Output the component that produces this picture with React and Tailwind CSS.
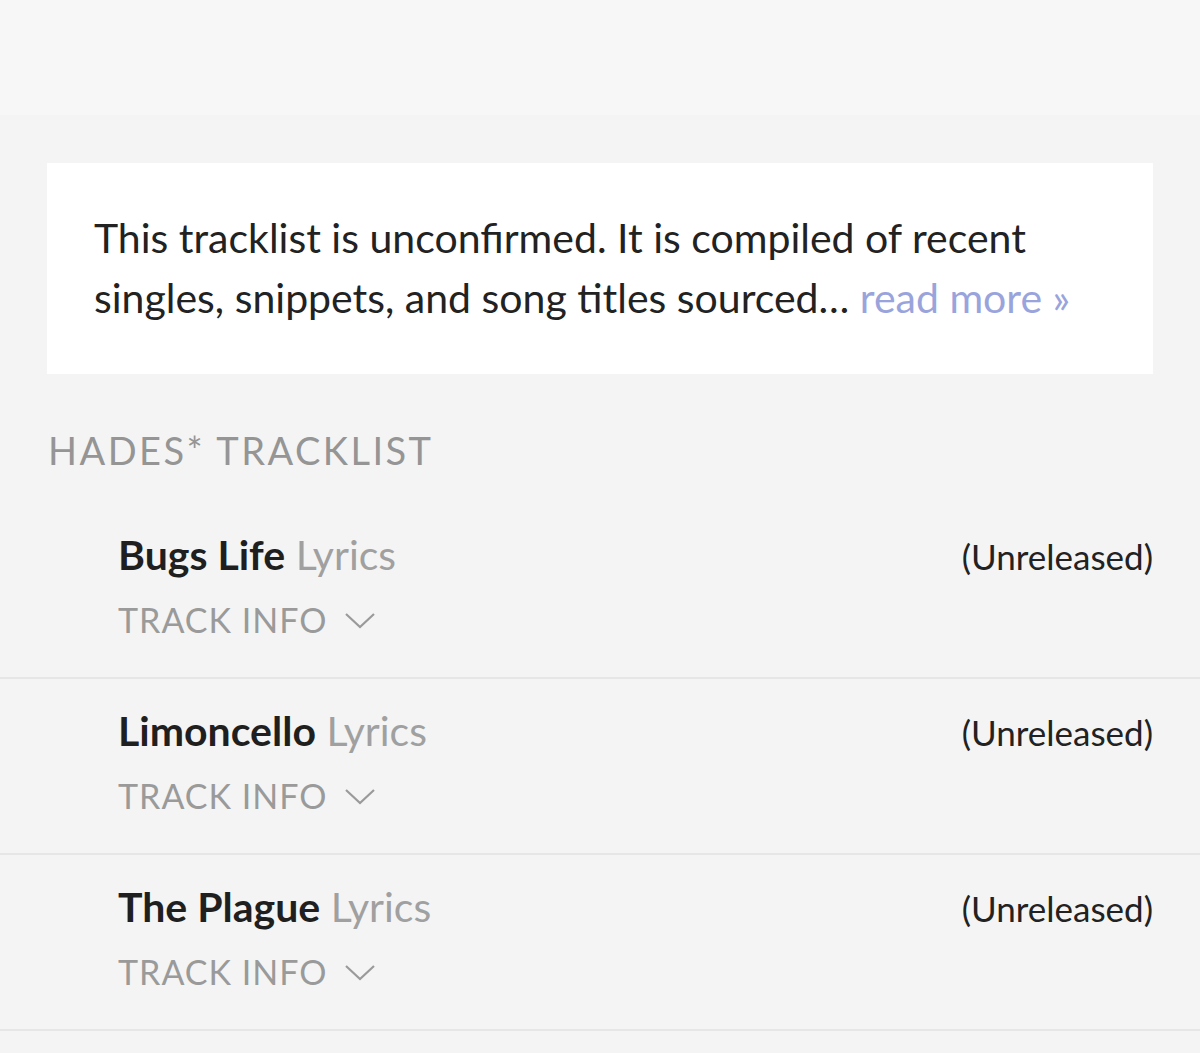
import React from "react";

const TRACKS = [
  { title: "Bugs Life" },
  { title: "Limoncello" },
  { title: "The Plague" },
];

function Chevron() {
  return (
    <svg width="32" height="20" viewBox="0 0 32 20" fill="none" className="ml-[16px]">
      <path d="M2 4 L16 17 L30 4" stroke="#9a9a9a" strokeWidth="2.2" />
    </svg>
  );
}

function TrackRow({ title }) {
  return (
    <div className="h-[176px] border-b-2 border-[#e6e6e6] pl-[118px] pr-[47px] pt-[27px]">
      <div className="flex items-baseline justify-between">
        <div className="text-[41px] leading-[48px]">
          <span className="font-bold text-[#1f1f1f]">{title}</span>{" "}
          <span className="text-[#a0a0a0]">Lyrics</span>
        </div>
        <div className="text-[35px] text-[#222]">(Unreleased)</div>
      </div>
      <div className="mt-[17px] flex items-center text-[34px] leading-[40px] tracking-[0.03em] text-[#9a9a9a]">
        TRACK INFO
        <Chevron />
      </div>
    </div>
  );
}

export default function App() {
  return (
    <div className="min-h-[1053px] w-full bg-[#f4f4f4] font-['Lato',sans-serif]">
      <div className="h-[115px] bg-[#f7f7f7]" />

      <div className="px-[47px] pt-[48px]">
        <div className="bg-white px-[47px] pt-[45px] pb-[46px]">
          <p className="text-[41px] leading-[60px] text-[#222]">
            This tracklist is unconfirmed. It is compiled of recent singles,
            snippets, and song titles sourced…{" "}
            <span className="text-[#9aa4dc]">read more »</span>
          </p>
        </div>
      </div>

      <div className="px-[48px] pt-[52px] pb-[29px]">
        <h2 className="text-[38px] leading-[48px] tracking-[0.065em] text-[#959595]">
          HADES* TRACKLIST
        </h2>
      </div>

      <div>
        {TRACKS.map((t) => (
          <TrackRow key={t.title} title={t.title} />
        ))}
      </div>
    </div>
  );
}
